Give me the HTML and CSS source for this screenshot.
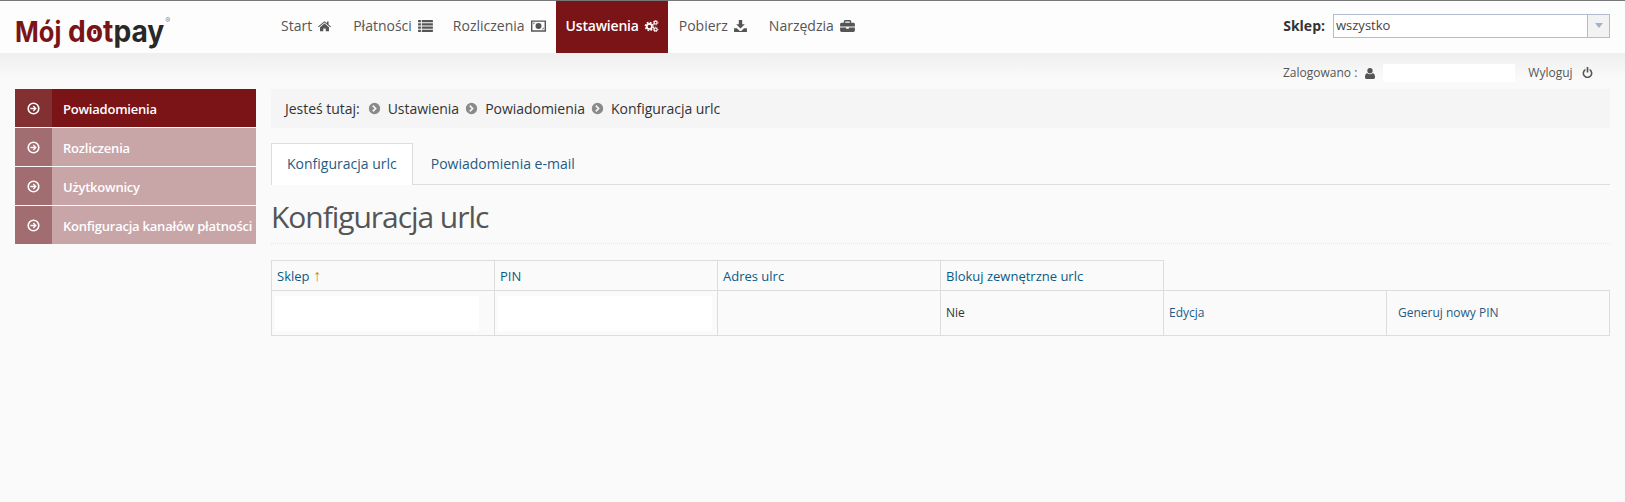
FILE: index.html
```html
<!DOCTYPE html>
<html lang="pl">
<head>
<meta charset="utf-8">
<title>Mój dotpay</title>
<link rel="stylesheet" href="styles.css">
</head>
<body>
<svg class="defs" width="0" height="0" aria-hidden="true">
  <symbol id="arrow" viewBox="0 0 16 16"><path fill-rule="evenodd" d="M8 .5a7.500 7.500 0 1 0 0 15 7.500 7.500 0 0 0 0-15zm0 2a5.500 5.500 0 1 1 0 11 5.500 5.500 0 0 1 0-11z"/><path d="M8.300 4.300 7.200 5.400 8.900 7.200H4.200v1.600h4.700L7.200 10.600l1.100 1.100L12 8z"/></symbol>
  <symbol id="crumb" viewBox="0 0 16 16"><path fill-rule="evenodd" d="M8 1a7 7 0 1 0 0 14A7 7 0 0 0 8 1zM6.600 3.800 10.800 8l-4.200 4.200L5.200 10.800 8 8 5.200 5.200z"/></symbol>
</svg>
<header class="topbar">
  <a class="logo"><span class="logo-moj">Mój</span><span class="logo-word"><span class="logo-dot">d<span class="logo-o">o</span>t</span><span class="logo-pay">pay</span><sup class="logo-r">®</sup></span></a>
  <nav class="nav">
    <a class="nav-item nav-first">Start <svg class="ico" viewBox="0 0 16 14"><path d="M8 1 0 7.600l.8.900L8 2.800l7.200 5.700.8-.9-3-2.400V1.500h-2v2.100zM2.500 8.400V13.500h4V10h3v3.500h4V8.400L8 4z"/></svg></a>
    <a class="nav-item">Płatności <svg class="ico ico-w" viewBox="0 0 16 13"><path d="M0 0h3v2.400H0zM4 0h12v2.400H4zM0 3.500h3v2.400H0zM4 3.500h12v2.400H4zM0 7h3v2.400H0zM4 7h12v2.400H4zM0 10.500h3v2.400H0zM4 10.500h12v2.400H4z"/></svg></a>
    <a class="nav-item">Rozliczenia <svg class="ico ico-w" viewBox="0 0 16 12"><path fill-rule="evenodd" d="M0 0h16v12H0zm1.500 1.500v9h13v-9zM8 2.800a3.200 3.200 0 1 1 0 6.400 3.200 3.200 0 0 1 0-6.400zM2.500 2.500h2l-2 2zm11 7h-2l2-2z"/></svg></a>
    <a class="nav-item nav-active">Ustawienia <svg class="ico ico-w gears" viewBox="0 0 16 14"><circle cx="5.500" cy="7.500" r="3" fill="none" stroke="#fff" stroke-width="2"/><circle cx="5.500" cy="7.500" r="4.600" fill="none" stroke="#fff" stroke-width="1.800" stroke-dasharray="2 1.610"/><circle cx="12.800" cy="3" r="1.700" fill="none" stroke="#fff" stroke-width="1.200"/><circle cx="12.800" cy="3" r="2.700" fill="none" stroke="#fff" stroke-width="1" stroke-dasharray="1.200 .92"/><circle cx="12.800" cy="11" r="1.700" fill="none" stroke="#fff" stroke-width="1.200"/><circle cx="12.800" cy="11" r="2.700" fill="none" stroke="#fff" stroke-width="1" stroke-dasharray="1.200 .92"/></svg></a>
    <a class="nav-item nav-dl">Pobierz <svg class="ico" viewBox="0 0 15 14"><path d="M5.500 0h4v5h3L7.500 10l-5-5h3zM0 9.500h3.300L6 12.200c.8.800 2.200.8 3 0l2.700-2.700H15V14H0z"/></svg></a>
    <a class="nav-item">Narzędzia <svg class="ico ico-w" viewBox="0 0 16 13"><path fill-rule="evenodd" d="M5 0h6l1 1v2h2.500c.8 0 1.500.7 1.500 1.500V7H0V4.500C0 3.700.7 3 1.500 3H4V1zm.5 1.500V3h5V1.500zM0 8h6.500v1.500h3V8H16v3.500c0 .8-.7 1.500-1.500 1.500h-13C.7 13 0 12.300 0 11.500z"/></svg></a>
  </nav>
  <div class="shop">
    <label class="shop-label">Sklep:</label>
    <div class="select">
      <span class="select-value">wszystko</span>
      <span class="select-btn"><span class="select-caret"></span></span>
    </div>
  </div>
</header>

<div class="userbar">
  <span class="user-label">Zalogowano :</span>
  <svg class="ico-user" viewBox="0 0 12 13"><path d="M6 0a3.200 3.200 0 1 1 0 6.400A3.200 3.200 0 0 1 6 0zM2.800 6.200c.9.800 2 1.200 3.200 1.200s2.300-.4 3.200-1.200c1.800.3 2.800 1.800 2.800 4.200v1c0 .9-.7 1.600-1.600 1.600H1.600C.7 13 0 12.300 0 11.400v-1c0-2.400 1-3.900 2.800-4.200z"/></svg>
  <span class="user-mask"></span>
  <a class="logout">Wyloguj</a>
  <svg class="ico-power" viewBox="0 0 12 13"><path d="M5 0h2v6.500H5z"/><path d="M3.500 2.200v2.100a4 4 0 1 0 5 0V2.200a5.800 5.800 0 1 1-5 0z"/></svg>
</div>

<div class="layout">
  <aside class="side">
    <a class="side-item side-active"><span class="side-ico"><svg class="ico-arrow"><use href="#arrow"/></svg></span><span class="side-text">Powiadomienia</span></a>
    <a class="side-item"><span class="side-ico"><svg class="ico-arrow"><use href="#arrow"/></svg></span><span class="side-text">Rozliczenia</span></a>
    <a class="side-item"><span class="side-ico"><svg class="ico-arrow"><use href="#arrow"/></svg></span><span class="side-text">Użytkownicy</span></a>
    <a class="side-item"><span class="side-ico"><svg class="ico-arrow"><use href="#arrow"/></svg></span><span class="side-text">Konfiguracja kanałów płatności</span></a>
  </aside>
  <main class="content">
    <div class="crumbs">
      <span class="crumb-lead">Jesteś tutaj:</span>
      <svg class="ico-crumb"><use href="#crumb"/></svg><span>Ustawienia</span>
      <svg class="ico-crumb"><use href="#crumb"/></svg><span>Powiadomienia</span>
      <svg class="ico-crumb"><use href="#crumb"/></svg><span>Konfiguracja urlc</span>
    </div>
    <div class="tabs">
      <a class="tab tab-active">Konfiguracja urlc</a>
      <a class="tab">Powiadomienia e-mail</a>
    </div>
    <h1 class="title">Konfiguracja urlc</h1>
    <table class="grid">
      <thead>
        <tr>
          <th><a>Sklep <span class="sort">↑</span></a></th>
          <th><a>PIN</a></th>
          <th><a>Adres ulrc</a></th>
          <th><a>Blokuj zewnętrzne urlc</a></th>
          <th class="blank"></th>
          <th class="blank"></th>
        </tr>
      </thead>
      <tbody>
        <tr>
          <td class="masked"><span class="mask mask-a"></span></td>
          <td class="masked"><span class="mask mask-b"></span></td>
          <td></td>
          <td class="plain">Nie</td>
          <td><a>Edycja</a></td>
          <td class="pin"><a>Generuj nowy PIN</a></td>
        </tr>
      </tbody>
    </table>
  </main>
</div>
</body>
</html>
```
FILE: styles.css
```css
* { box-sizing: border-box; }
html, body { margin: 0; padding: 0; }
body {
  background: #fafafa;
  color: #555;
  font-family: "Open Sans", "Noto Sans", sans-serif;
  font-size: 13px;
  height: 502px;
  overflow: hidden;
}
.defs { display: block; height: 0; }

.topbar {
  height: 53px;
  background: #fdfdfd;
  border-top: 1px solid #777;
  display: flex;
  align-items: stretch;
  padding: 0 15px;
}
.logo {
  width: 256px;
  height: 52px;
  font-family: Inter, "Liberation Sans", Arial, sans-serif;
  font-weight: 700;
  font-size: 30px;
  line-height: 60px;
  white-space: nowrap;
}
.logo-moj { display: inline-block; color: #7b1416; font-size: 29px; transform: scaleX(.88); transform-origin: left center; }
.logo-word { display: inline-block; line-height: 60px; transform: scaleX(.94); transform-origin: left center; }
.logo-dot { color: #7b1416; }
.logo-o { position: relative; }
.logo-o::after {
  content: "";
  position: absolute;
  left: 8px;
  top: 17px;
  width: 3px;
  height: 4px;
  background: #7b1416;
}
.logo-pay { color: #282828; }
.logo-r { color: #888; font-size: 8px; font-weight: 400; vertical-align: 19px; line-height: 0; margin-left: 1px; }

.nav { display: flex; }
.nav-item {
  display: flex;
  align-items: center;
  gap: 6px;
  padding: 0 10px 3px;
  font-size: 14px;
  color: #555;
  white-space: nowrap;
}
.nav-first { padding-right: 12px; }
.nav-dl { padding: 0 12px 3px 11px; }
.nav-active { background: #7b1416; color: #fff; font-weight: 600; letter-spacing: -0.2px; gap: 5px; padding-right: 9px; }
.ico { width: 13px; height: 12px; fill: #555; }
.ico-w { width: 15px; }
.nav-active .ico { fill: #fff; }

.shop { margin-left: auto; display: flex; align-items: center; gap: 8px; padding-bottom: 3px; }
.shop-label { font-size: 14px; font-weight: 700; color: #333; }
.select {
  width: 277px;
  height: 24px;
  background: #fff;
  border: 1px solid #b3bccf;
  display: flex;
  justify-content: space-between;
}
.select-value { font-size: 13px; line-height: 21px; padding-left: 2px; color: #444; }
.select-btn {
  width: 22px;
  background: #f2f2f2;
  border-left: 1px solid #b3bccf;
  display: flex;
  align-items: center;
  justify-content: center;
}
.select-caret {
  width: 0;
  height: 0;
  border: 4px solid transparent;
  border-top: 5px solid #9fb3d1;
  border-bottom: 0;
}

.userbar {
  height: 36px;
  background: linear-gradient(#efefef, #fafafa 26px);
  display: flex;
  align-items: flex-start;
  padding: 11px 0 0 1283px;
  font-size: 12px;
  color: #555;
  line-height: 18px;
}
.ico-user { width: 10px; height: 11px; fill: #555; margin: 4px 0 0 8px; }
.user-mask { width: 132px; height: 18px; background: #fff; margin-left: 8px; }
.logout { margin-left: 13px; }
.ico-power { width: 11px; height: 11px; fill: #555; margin: 3px 0 0 9px; }

.layout {
  display: grid;
  grid-template-columns: 241px 1fr;
  gap: 15px;
  padding: 0 15px;
}
.side-item {
  display: flex;
  height: 38px;
  margin-bottom: 1px;
  background: #c8a5a7;
  color: #fff;
  font-size: 13px;
  font-weight: 600;
  letter-spacing: -0.22px;
  line-height: 40px;
  white-space: nowrap;
}
.side-active { background: #7b1416; }
.side-ico {
  width: 37px;
  background: #a26d70;
  display: flex;
  align-items: center;
  justify-content: center;
}
.side-active .side-ico { background: #833033; }
.ico-arrow { width: 13px; height: 13px; fill: #fff; }
.side-text { padding-left: 11px; }

.crumbs {
  height: 39px;
  background: #f5f5f5;
  display: flex;
  align-items: center;
  padding-left: 14px;
  font-size: 14px;
  letter-spacing: -0.03px;
  color: #333;
}
.crumb-lead { margin-right: 2px; }
.ico-crumb { width: 13px; height: 13px; fill: #8a8a8a; margin: 0 7px 0 0; }
.crumbs span + .ico-crumb { margin-left: 6px; }

.tabs {
  margin-top: 15px;
  height: 42px;
  border-bottom: 1px solid #ddd;
  display: flex;
  font-size: 14px;
  color: #1f5b85;
}
.tab { height: 41px; padding: 0 15px; line-height: 40px; border: 1px solid transparent; margin-right: 2px; }
.tab-active { background: #fff; border-color: #ddd; border-bottom: 0; height: 42px; }

.title {
  margin: 0;
  height: 59px;
  border-bottom: 1px dotted #e6e6e6;
  font-size: 30px;
  font-weight: 400;
  letter-spacing: -1.05px;
  line-height: 64px;
  color: #555;
}

.grid {
  margin-top: 16px;
  width: 1339px;
  table-layout: fixed;
  border-collapse: collapse;
  font-size: 12px;
}
.grid th, .grid td { border: 1px solid #ddd; padding: 0 5px; text-align: left; }
.grid th { height: 30px; font-size: 13px; font-weight: 400; color: #0b5a85; }
.grid th.blank { border: 0; border-bottom: 1px solid #ddd; }
.grid td { height: 45px; padding-bottom: 2px; color: #1f5b85; }
.grid td.plain { color: #333; }
.grid td.pin { padding-left: 11px; }
.grid td.masked { padding: 0; vertical-align: middle; }
.sort { color: #c9862f; font-size: 16px; line-height: 14px; }
.mask { display: block; height: 35px; background: #fff; }
.mask-a { width: 204px; margin-left: 3px; }
.mask-b { width: 214px; margin-left: 3px; }
```
